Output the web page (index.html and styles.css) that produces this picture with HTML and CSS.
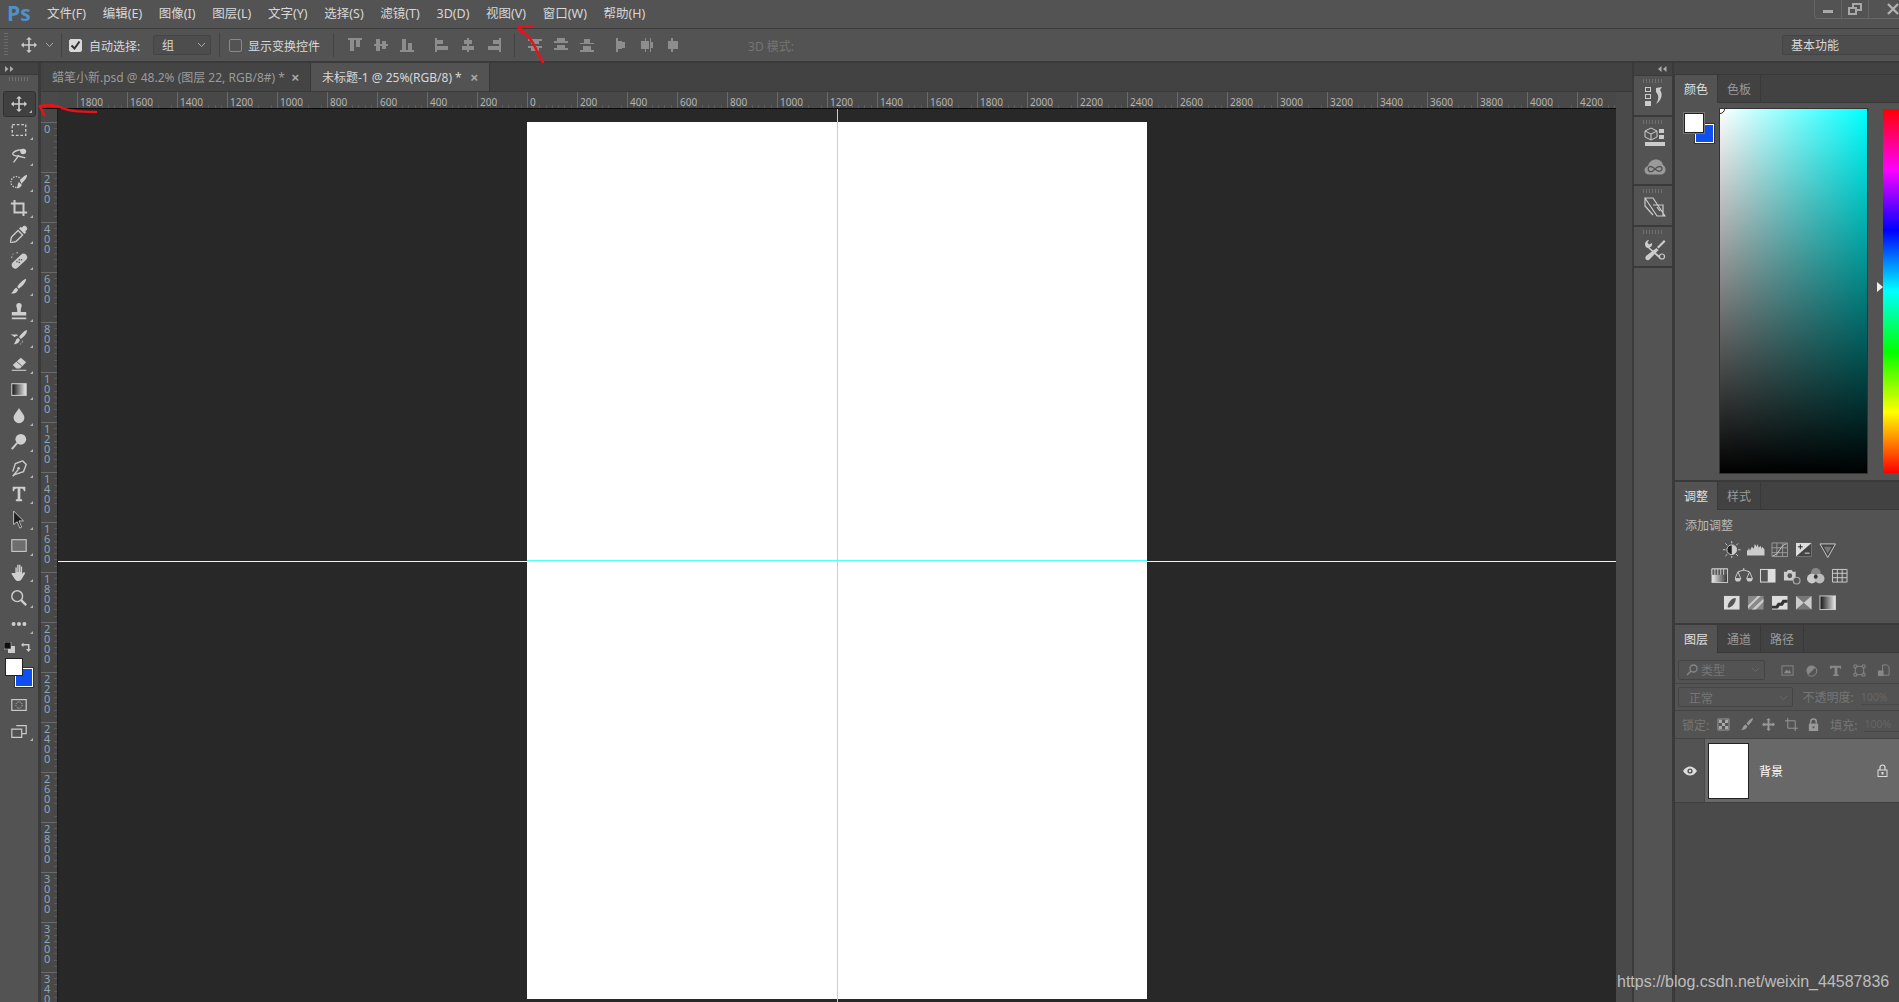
FILE: index.html
```html
<!DOCTYPE html>
<html lang="zh-CN">
  <head>
    <meta charset="utf-8">
    <title>Photoshop</title>
    <link rel="stylesheet" href="styles.css">
  </head>
  <body>
    <div class="app">
      <header class="menubar">
        <span class="logo">Ps</span>
        <nav class="menu">
          <span>文件(F)</span><span>编辑(E)</span><span>图像(I)</span><span>图层(L)</span><span>文字(Y)</span><span>选择(S)</span><span>滤镜(T)</span><span>3D(D)</span><span>视图(V)</span><span>窗口(W)</span><span>帮助(H)</span>
        </nav>
        <div class="winbtns">
          <span class="winbtn"><svg width="12" height="12" viewBox="0 0 12 12"><rect x="1" y="7" width="10" height="3" fill="#a8a8a8"/></svg></span>
          <span class="winbtn"><svg width="14" height="12" viewBox="0 0 14 12" fill="none" stroke="#a8a8a8" stroke-width="2"><rect x="5" y="1" width="8" height="6"/><rect x="1" y="5" width="7" height="6" fill="#535353"/></svg></span>
          <span class="winbtn close"><svg width="12" height="12" viewBox="0 0 12 12" stroke="#b0b0b0" stroke-width="2.400"><path d="M1 1l10 10M11 1L1 11"/></svg></span>
        </div>
      </header>

      <div class="optbar">
        <span class="grip-v"></span>
        <svg class="opt-move" width="16" height="16" viewBox="0 0 20 20" fill="#ccc"><path d="M10 0l3.500 3.500h-2.500v5.500h5.500v-2.500l3.500 3.500-3.500 3.500v-2.500h-5.500v5.500h2.500l-3.500 3.500-3.500-3.500h2.500v-5.500h-5.500v2.500l-3.500-3.500 3.500-3.500v2.500h5.500v-5.500h-2.500z"/></svg>
        <svg class="chev opt-chev" width="9" height="6" viewBox="0 0 9 6"><path d="M1 1l3.500 3.500L8 1" fill="none" stroke="#aaa"/></svg>
        <span class="opt-sep sep-a"></span>
        <span class="check on"><svg width="13" height="13" viewBox="0 0 13 13"><path d="M2.500 6.500l3 3 5-7" fill="none" stroke="#333" stroke-width="2"/></svg></span>
        <span class="opt-label auto-label">自动选择:</span>
        <span class="select group-select">组<svg class="chev" width="9" height="6" viewBox="0 0 9 6"><path d="M1 1l3.500 3.500L8 1" fill="none" stroke="#aaa"/></svg></span>
        <span class="opt-sep sep-b"></span>
        <span class="check"></span>
        <span class="opt-label show-label">显示变换控件</span>
        <span class="opt-sep sep-c"></span>

        <div class="align-group g1">
          <svg viewBox="0 0 16 16"><path d="M1 1h14v2H1zM3 3h4v11H3zM9 3h4v7H9z"/></svg>
          <svg viewBox="0 0 16 16"><path d="M1 7h14v2H1zM3 2h4v12H3zM9 4h4v8H9z"/></svg>
          <svg viewBox="0 0 16 16"><path d="M1 13h14v2H1zM3 2h4v11H3zM9 6h4v7H9z"/></svg>
        </div>
        <div class="align-group g2">
          <svg viewBox="0 0 16 16"><path d="M1 1h2v14H1zM3 3h6v4H3zM3 9h11v4H3z"/></svg>
          <svg viewBox="0 0 16 16"><path d="M7 1h2v14H7zM4 3h8v4H4zM2 9h12v4H2z"/></svg>
          <svg viewBox="0 0 16 16"><path d="M13 1h2v14h-2zM7 3h6v4H7zM2 9h11v4H2z"/></svg>
        </div>
        <span class="opt-sep sep-d"></span>
        <div class="align-group g3">
          <svg viewBox="0 0 16 16"><path d="M1 2h14v2H1zM4 4h8v3H4zM1 9h14v2H1zM4 11h8v3H4z"/></svg>
          <svg viewBox="0 0 16 16"><path d="M1 4h14v2H1zM4 1h8v3H4zM1 11h14v2H1zM4 8h8v3H4z"/></svg>
          <svg viewBox="0 0 16 16"><path d="M1 13h14v2H1zM4 9h8v4H4zM1 6h14v1H1zM5 2h6v4H5z"/></svg>
        </div>
        <div class="align-group g4">
          <svg viewBox="0 0 16 16"><path d="M3 1h2v14H3zM5 4h4v8H5zM9 5h3v6H9z"/></svg>
          <svg viewBox="0 0 16 16"><path d="M6 1h1v14H6zM2 4h4v8H2zM7 4h3v8H7zM11 1h1v14h-1zM12 5h2v6h-2z"/></svg>
          <svg viewBox="0 0 16 16"><path d="M6 1h2v14H6zM3 4h3v8H3zM8 4h5v8H8z"/></svg>
        </div>
        <span class="opt-label dim mode-label">3D 模式:</span>
        <span class="select workspace-select">基本功能</span>
      </div>

      <div class="workspace">
        <aside class="toolbar">
          <div class="collapse-strip"><svg width="9" height="6" viewBox="0 0 9 6" fill="#aaa"><path d="M0 0l3.500 3L0 6zM5 0l3.500 3L5 6z"/></svg></div>
          <div class="grip-h"></div>
          <div class="tools">
            <span class="tool active more"><svg viewBox="0 0 20 20"><path d="M10 0l3.500 3.500h-2.500v5.500h5.500v-2.500l3.500 3.500-3.500 3.500v-2.500h-5.500v5.500h2.500l-3.500 3.500-3.500-3.500h2.500v-5.500h-5.500v2.500l-3.500-3.500 3.500-3.500v2.500h5.500v-5.500h-2.500z"/></svg></span>
            <span class="tool more"><svg viewBox="0 0 20 20"><rect x="2.500" y="4" width="15" height="12" fill="none" stroke="#ccc" stroke-width="1.500" stroke-dasharray="3 2"/></svg></span>
            <span class="tool more"><svg viewBox="0 0 20 20"><path d="M3 7c2-3 9-5 12-3M3 7c0 2 3 3 6 3M9 10l8 2M4 17l6-8" fill="none" stroke="#ccc" stroke-width="1.500"/><path d="M11 4c2-3 7-3 7 1 0 3-4 4-6 2z"/></svg></span>
            <span class="tool more"><svg viewBox="0 0 20 20"><circle cx="7" cy="10" r="6" fill="none" stroke="#ccc" stroke-width="1.500" stroke-dasharray="1.500 1.500"/><path d="M19 2c0 4-4 8-6 9l-2-2c1-2 4-6 8-7zM10 10l3 3c-1 3-3 4-6 4 2-1 1-5 3-7z"/></svg></span>
            <span class="tool more"><svg viewBox="0 0 20 20"><path d="M5 1v14h14M1 5h14v14" fill="none" stroke="#ccc" stroke-width="2.200"/></svg></span>
            <span class="tool more"><svg viewBox="0 0 20 20"><path d="M15 1c2-1 5 2 4 4l-2 2 1 1-2 2-6-6 2-2 1 1z"/><path d="M9 6l5 5-7 7c-1 1-3 1-4 1l-2 1-1-1 1-2c0-1 0-3 1-4z" fill="none" stroke="#ccc" stroke-width="1.500"/></svg></span>
            <span class="tool more"><svg viewBox="0 0 20 20"><path d="M6 15.500L15 7" fill="none" stroke="#ccc" stroke-width="8" stroke-linecap="round"/><path d="M9 2H7M4 3L3 4M2 6v2" stroke="#ccc" fill="none"/><g fill="#535353"><rect x="9.500" y="9" width="1.500" height="1.500"/><rect x="12" y="9" width="1.500" height="1.500"/><rect x="9.500" y="12" width="1.500" height="1.500"/><rect x="7" y="11" width="1.500" height="1.500"/></g></svg></span>
            <span class="tool more"><svg viewBox="0 0 20 20"><path d="M18 2c0 4-5 9-8 11l-2-2c2-3 6-8 10-9zM7 12l2 2c-1 4-4 5-8 4 3-1 3-5 6-6z"/></svg></span>
            <span class="tool more"><svg viewBox="0 0 20 20"><path d="M7 3a3 3 0 1 1 6 0c0 2-1 2-1 5v2h6v4H2v-4h6V8c0-3-1-3-1-5zM2 16h16v2H2z"/></svg></span>
            <span class="tool more"><svg viewBox="0 0 20 20"><path d="M19 1c0 4-4 8-7 10l-2-2c2-3 5-7 9-8zM9 10l2 2c-1 4-4 5-7 5 2-1 2-6 5-7zM1 6h7l1 1-4 2z"/><path d="M14 13c0 2-1 3-3 4" stroke="#ccc" fill="none" stroke-dasharray="1 1"/></svg></span>
            <span class="tool more"><svg viewBox="0 0 20 20"><path d="M12 3l6 5-7 7H7l-4-4z"/><path d="M7 7l6 5" stroke="#535353" fill="none"/><path d="M2 17h16" stroke="#ccc" stroke-width="1.200"/></svg></span>
            <span class="tool more"><svg viewBox="0 0 20 20"><defs><linearGradient id="grad-tool"><stop offset="0" stop-color="#111"/><stop offset="1" stop-color="#eee"/></linearGradient></defs><rect x="2" y="3" width="16" height="13" fill="url(#grad-tool)" stroke="#ccc" stroke-width="1.200"/></svg></span>
            <span class="tool more"><svg viewBox="0 0 20 20"><path d="M10 1c2 4 6 7 6 11a6 6 0 0 1-12 0c0-4 4-7 6-11z"/></svg></span>
            <span class="tool more"><svg viewBox="0 0 20 20"><circle cx="12" cy="7" r="6"/><path d="M8 11l-6 7" stroke="#ccc" stroke-width="2.200"/></svg></span>
            <span class="tool more"><svg viewBox="0 0 20 20"><path d="M14 2l4 4-3 8-9 3-3 2 6-7M14 2L6 5l-3 9" fill="none" stroke="#ccc" stroke-width="1.500"/><circle cx="9.500" cy="10.500" r="1.500"/></svg></span>
            <span class="tool more"><svg viewBox="0 0 20 20"><path d="M3 2h14v5h-1.500c-.5-2-1-3-3-3H11.500v11.500l2 .5v2h-7v-2l2-.5V4H7.500c-2 0-2.500 1-3 3H3z"/></svg></span>
            <span class="tool more"><svg viewBox="0 0 20 20"><path d="M4 0l11 11h-5l3 7-2 1-3-7-4 3z" fill="#1f1f1f" stroke="#ccc"/></svg></span>
            <span class="tool more"><svg viewBox="0 0 20 20"><rect x="2" y="3" width="16" height="13" fill="#6e6e6e" stroke="#ccc" stroke-width="1.200"/></svg></span>
            <span class="tool more"><svg viewBox="0 0 20 20"><path d="M6 11V5h1.500v5H8V2h1.500v8h.5V2h1.500v8h.5V4h1.500v8l2-2 1.500 1-3.500 6c-1 2-2 3-4 3s-3-.5-4-2l-4-6 1-1z"/></svg></span>
            <span class="tool more"><svg viewBox="0 0 20 20"><circle cx="8" cy="8" r="6" fill="none" stroke="#ccc" stroke-width="1.600"/><path d="M12 12l6 6" stroke="#ccc" stroke-width="2.600"/></svg></span>
            <span class="tool more"><svg viewBox="0 0 20 20"><circle cx="4" cy="10" r="2.200"/><circle cx="10" cy="10" r="2.200"/><circle cx="16" cy="10" r="2.200"/></svg></span>
          </div>
          <div class="colors">
            <div class="colors-icons">
              <svg width="11" height="11" viewBox="0 0 11 11"><rect x="4" y="4" width="7" height="7" fill="#ccc"/><rect x="0" y="0" width="7" height="7" fill="#111" stroke="#ccc" stroke-width=".6"/></svg>
              <svg width="11" height="11" viewBox="0 0 11 11"><path d="M1 3l2.500-2.500v1.500h6v5h1.500L8.500 10 6 7h2V3.500H3.500V5z" fill="#ccc"/></svg>
            </div>
            <div class="swatch-pair tool-pair"><span class="swatch bg"></span><span class="swatch fg"></span></div>
          </div>
          <span class="tool"><svg viewBox="0 0 20 20"><rect x="2" y="4" width="16" height="12" fill="none" stroke="#ccc" stroke-width="1.300"/><circle cx="10" cy="10" r="3.500" fill="none" stroke="#ccc" stroke-dasharray="1.200 1.200"/></svg></span>
          <span class="tool more"><svg viewBox="0 0 20 20"><path d="M7 4h11v9h-5M2 8h11v9H2z" fill="none" stroke="#ccc" stroke-width="1.300"/></svg></span>
        </aside>

        <main class="docs">
          <div class="tabs">
            <span class="tab">蜡笔小新.psd @ 48.2% (图层 22, RGB/8#) *<b class="tab-x">×</b></span>
            <span class="tab current">未标题-1 @ 25%(RGB/8) *<b class="tab-x">×</b></span>
          </div>
          <div class="hruler-row">
            <div class="hruler">
              <span class="corner"></span>
              <span class="h-first"></span>
              <span class="mark">1800</span><span class="mark">1600</span><span class="mark">1400</span><span class="mark">1200</span><span class="mark">1000</span><span class="mark">800</span><span class="mark">600</span><span class="mark">400</span><span class="mark">200</span><span class="mark">0</span><span class="mark">200</span><span class="mark">400</span><span class="mark">600</span><span class="mark">800</span><span class="mark">1000</span><span class="mark">1200</span><span class="mark">1400</span><span class="mark">1600</span><span class="mark">1800</span><span class="mark">2000</span><span class="mark">2200</span><span class="mark">2400</span><span class="mark">2600</span><span class="mark">2800</span><span class="mark">3000</span><span class="mark">3200</span><span class="mark">3400</span><span class="mark">3600</span><span class="mark">3800</span><span class="mark">4000</span><span class="mark">4200</span>
            </div>
            <div class="scroll-top"></div>
          </div>
          <div class="doc-body">
            <div class="vruler">
              <span class="vmark">0</span><span class="vmark">200</span><span class="vmark">400</span><span class="vmark">600</span><span class="vmark">800</span><span class="vmark">1000</span><span class="vmark">1200</span><span class="vmark">1400</span><span class="vmark">1600</span><span class="vmark">1800</span><span class="vmark">2000</span><span class="vmark">2200</span><span class="vmark">2400</span><span class="vmark">2600</span><span class="vmark">2800</span><span class="vmark">3000</span><span class="vmark">3200</span><span class="vmark">340</span>
            </div>
            <div class="canvas">
              <div class="page"></div>
              <span class="guide-h"></span>
              <span class="guide-h-page"></span>
              <span class="guide-v"></span>
            </div>
            <div class="scrollbar"></div>
          </div>
        </main>

        <aside class="dock">
          <div class="dock-top"></div>
          <div class="dock-group">
            <span class="grip-h"></span>
            <svg width="22" height="22" viewBox="0 0 22 22"><path d="M1 1h6v5H1zM2 2v3h4V2zM1 8h6v5H1zM2 9v3h4V9zM1 15h6v5H1z" fill="#ccc" fill-rule="evenodd"/><path d="M12 2l6-1-2 3c3 4 2 10-4 14 3-5 3-9 0-12z" fill="#ccc"/></svg>
          </div>
          <div class="dock-group tall">
            <span class="grip-h"></span>
            <svg width="22" height="20" viewBox="0 0 22 20"><path d="M7 1l6 3v6l-6 3-6-3V4z" fill="none" stroke="#ccc"/><path d="M1 4l6 3 6-3M7 7v6" stroke="#ccc" fill="none"/><path d="M15 2h5v4h-5zM15 8h5v4h-5zM1 15h20v4H1z" fill="#ccc"/></svg>
            <svg class="cc-icon" width="22" height="16" viewBox="0 0 22 16"><path d="M5 15.500c-3 0-4.500-2-4.500-4.500 0-2 1.500-3.500 3.500-4C5 3 8 .5 12 .5c4 0 6.500 2.500 7 5.500 1.500.7 2.500 2.500 2.500 4.500 0 3-2 5-5 5z" fill="#9a9a9a"/><path d="M5 8c2-1.500 4 0 6 2s4 3 6 1.500 1-4-1.500-4S12 9 10 11s-4 2-5 1-1-3 0-4z" fill="none" stroke="#535353" stroke-width="1.400"/></svg>
          </div>
          <div class="dock-group">
            <span class="grip-h"></span>
            <svg width="22" height="22" viewBox="0 0 22 22" fill="none" stroke="#ccc" stroke-width="1.200"><path d="M1 2h8l12 18h-8zM1 2v8l8 9M9 9h10v11h-6"/><path d="M13 11l3 4" /></svg>
          </div>
          <div class="dock-group tools-group">
            <span class="grip-h"></span>
            <svg width="22" height="22" viewBox="0 0 22 22"><path d="M1 5c0-2 2-4 4-4L3.500 3.500 5 5.500 8 4c.5 2-.5 4-2.500 4.500l12 10-1.500 1.500-12-11C2.500 9 1 7.500 1 5z" fill="#ccc"/><path d="M20 1l1.500 1.500-7 7L13 8zM12.500 9l2 2L6 20c-1.500 1.500-3 1.500-4 .5s-1-2.500.5-4z" fill="#ccc"/><circle cx="18" cy="17.500" r="2.500" fill="#535353" stroke="#ccc" stroke-width="1.200"/></svg>
          </div>
          <div class="dock-rest"></div>
        </aside>

        <section class="panels">
          <div class="panels-top"><svg width="9" height="6" viewBox="0 0 9 6" fill="#aaa"><path d="M3.500 0L0 3l3.500 3zM8.500 0L5 3l3.500 3z"/></svg></div>
          <div class="panel color-panel">
            <div class="panel-tabs"><span class="ptab current">颜色</span><span class="ptab">色板</span></div>
            <div class="color-body">
              <div class="swatch-pair panel-pair"><span class="swatch bg"></span><span class="swatch fg"></span></div>
              <div class="field"><span class="field-dot"></span></div>
              <span class="hue-arrow"></span>
              <div class="hue"></div>
            </div>
          </div>
          <div class="panel adjust-panel">
            <div class="panel-tabs"><span class="ptab current">调整</span><span class="ptab">样式</span></div>
            <div class="adjust-title">添加调整</div>
            <div class="adj-row r1">
              <svg viewBox="0 0 18 18"><circle cx="9" cy="9" r="5" fill="#222" stroke="#ccc"/><path d="M9 4a5 5 0 0 1 0 10z" fill="#ccc"/><path d="M9 0v2.500M9 15.500V18M0 9h2.500M15.500 9H18M2.500 2.500l2 2M13.500 13.500l2 2M2.500 15.500l2-2M13.500 4.500l2-2" stroke="#ccc"/></svg>
              <svg viewBox="0 0 18 18"><path d="M0 15V9l1 1 1-3 1 3 2-4 2 2 1-5 2 3 1-3 1 4 2-2 1 3 1-2 2 3v6z" fill="#ccc"/></svg>
              <svg viewBox="0 0 18 18" fill="none" stroke="#999"><path d="M1 2h16v14H1zM6 2v14M12 2v14M1 7h16M1 12h16"/><path d="M2 15c6 0 8-12 14-12" stroke="#ccc"/></svg>
              <svg viewBox="0 0 18 18"><path d="M1 2h16v14H1z" fill="#ddd"/><path d="M17 2v14H1z" fill="#444"/><path d="M3 6h5M5.500 3.500v5" stroke="#222"/><path d="M10 12.500h5" stroke="#ddd"/></svg>
              <svg viewBox="0 0 18 18"><path d="M1 3h16L9 17z" fill="#444" stroke="#ccc"/><path d="M5 6h8l-4 7z" fill="#777"/></svg>
            </div>
            <div class="adj-row r2">
              <svg viewBox="0 0 18 18"><defs><linearGradient id="grad-hsl"><stop offset="0" stop-color="#eee"/><stop offset="1" stop-color="#333"/></linearGradient></defs><rect x="1" y="2" width="16" height="14" fill="url(#grad-hsl)" stroke="#ccc"/><path d="M1 8V2h16v6M4 2v6M7 2v6M10 2v6M13 2v6" stroke="#ccc" fill="#555"/></svg>
              <svg viewBox="0 0 18 18"><path d="M9 1v3M3 5l6-2 6 2" stroke="#ccc" fill="none"/><path d="M0 12l3-7 3 7zM12 12l3-7 3 7z" fill="none" stroke="#ccc"/><path d="M0 12h6a3 3 0 0 1-6 0zM12 12h6a3 3 0 0 1-6 0z" fill="#ccc"/></svg>
              <svg viewBox="0 0 18 18"><rect x="1" y="2" width="16" height="14" fill="#ddd"/><rect x="2" y="3" width="7" height="12" fill="#555"/></svg>
              <svg viewBox="0 0 18 18"><path d="M1 5h3l1-2h4l1 2h3v9H1z" fill="#ccc"/><circle cx="7" cy="9" r="2.500" fill="#555"/><circle cx="14" cy="14" r="3.500" fill="#555" stroke="#aaa" stroke-width="1.200"/></svg>
              <svg viewBox="0 0 18 18"><circle cx="9" cy="6" r="5" fill="#888"/><circle cx="5" cy="12" r="5" fill="#ccc"/><circle cx="13" cy="12" r="5" fill="#bbb"/><circle cx="9" cy="10" r="2" fill="#333"/></svg>
              <svg viewBox="0 0 18 18" fill="none" stroke="#ccc"><path d="M1.500 2.500h15v13h-15zM6.500 2.500v13M11.500 2.500v13M1.500 6.500h15M1.500 11h15"/></svg>
            </div>
            <div class="adj-row r3">
              <svg viewBox="0 0 18 18"><rect x="1" y="2" width="16" height="14" fill="#ddd"/><path d="M13 4c1 3-3 10-8 10-1-3 3-10 8-10z" fill="#555"/></svg>
              <svg viewBox="0 0 18 18"><rect x="1" y="2" width="16" height="14" fill="#888"/><path d="M1 12L11 2h3L1 15zM5 16L17 5v3L9 16z" fill="#ccc"/></svg>
              <svg viewBox="0 0 18 18"><rect x="1" y="2" width="16" height="14" fill="#ddd"/><path d="M1 12h4l2-3h3l2-3h5v3h-3l-2 3H9l-2 3H1z" fill="#333"/></svg>
              <svg viewBox="0 0 18 18"><rect x="1" y="2" width="16" height="14" fill="#777"/><path d="M1 2l8 7-8 7zM17 2L9 9l8 7z" fill="#ccc"/></svg>
              <svg viewBox="0 0 18 18"><rect x="1" y="2" width="16" height="14" fill="url(#grad-tool)" stroke="#ccc"/></svg>
            </div>
          </div>
          <div class="panel layers-panel">
            <div class="panel-tabs"><span class="ptab current">图层</span><span class="ptab">通道</span><span class="ptab">路径</span></div>
            <div class="layer-line filter-line">
              <span class="select filter-select"><svg width="12" height="12" viewBox="0 0 12 12" fill="none" stroke="#888" stroke-width="1.300"><circle cx="7.500" cy="4.500" r="3.500"/><path d="M5 7l-4 4"/></svg><span>类型</span><svg class="chev" width="9" height="6" viewBox="0 0 9 6"><path d="M1 1l3.500 3.500L8 1" fill="none" stroke="#666"/></svg></span>
              <div class="filter-icons">
                <svg viewBox="0 0 14 14"><rect x="1" y="2" width="12" height="10" fill="none" stroke="#888"/><path d="M3 10l3-4 2 2 1-2 2 4z" fill="#888"/></svg>
                <svg viewBox="0 0 14 14"><circle cx="7" cy="7" r="5.500" fill="#888"/><path d="M11 3.500a5.500 5.500 0 0 1-8 8z" fill="#555" stroke="#888"/></svg>
                <svg viewBox="0 0 14 14"><path d="M1 2h12v3h-1c0-1-1-1-3-1v7l1.500.5V13h-6v-1.500L6 11V4c-2 0-3 0-3 1H1z" fill="#888"/></svg>
                <svg viewBox="0 0 14 14" fill="none" stroke="#888"><path d="M2.500 2.500h9v9h-9z"/><path d="M1 1h3v3H1zM10 1h3v3h-3zM1 10h3v3H1zM10 10h3v3h-3z" fill="#555"/></svg>
                <svg viewBox="0 0 14 14"><path d="M6 1h5l2 2v9H6z" fill="none" stroke="#888"/><rect x="1" y="7" width="6" height="6" fill="#888"/></svg>
              </div>
            </div>
            <div class="layer-line blend-line">
              <span class="select blend-select"><span>正常</span><svg class="chev" width="9" height="6" viewBox="0 0 9 6"><path d="M1 1l3.500 3.500L8 1" fill="none" stroke="#666"/></svg></span>
              <span class="dim-label">不透明度:</span>
              <span class="pct">100%</span>
            </div>
            <div class="layer-line lock-line">
              <span class="dim-label lock-label">锁定:</span>
              <div class="lock-icons">
                <svg viewBox="0 0 14 14"><path d="M1 1h12v12H1z" fill="#555" stroke="#999"/><path d="M2 2h3.300v3.300H2zM8.700 2H12v3.300H8.700zM5.300 5.300h3.400v3.400H5.300zM2 8.700h3.300V12H2zM8.700 8.700H12V12H8.700z" fill="#aaa"/></svg>
                <svg viewBox="0 0 14 14"><path d="M14 0c0 3-3 6-5 8L7 6c2-3 4-5 7-6zM6 7l2 2c-1 3-3 4-7 4 2-1 2-5 5-6z" fill="#999"/></svg>
                <svg viewBox="0 0 14 14"><path d="M7 0l2.500 2.500H8V6h3.500V4.500L14 7l-2.500 2.500V8H8v3.500h1.500L7 14l-2.500-2.500H6V8H2.500v1.500L0 7l2.500-2.500V6H6V2.500H4.500z" fill="#999"/></svg>
                <svg viewBox="0 0 14 14" fill="none" stroke="#999"><path d="M3 0v11h11M0 3h11v11"/></svg>
                <svg viewBox="0 0 14 14"><path d="M4 6V4a3 3 0 0 1 6 0v2" fill="none" stroke="#999" stroke-width="1.500"/><rect x="2" y="6" width="10" height="8" fill="#999"/><rect x="6" y="9" width="2" height="2" fill="#555"/></svg>
              </div>
              <span class="dim-label fill-label">填充:</span>
              <span class="pct">100%</span>
            </div>
            <div class="layer-row">
              <span class="eye-col"><svg width="14" height="10" viewBox="0 0 14 10"><path d="M0 5c2-3 4.500-4.500 7-4.500S12 2 14 5c-2 3-4.500 4.500-7 4.500S2 8 0 5z" fill="#ddd"/><circle cx="7" cy="5" r="2.600" fill="#535353"/><circle cx="7" cy="5" r="1.200" fill="#ddd"/></svg></span>
              <div class="layer-main">
                <span class="thumb"></span>
                <span class="layer-name">背景</span>
                <svg class="layer-lock" width="11" height="13" viewBox="0 0 11 13"><path d="M3 6V3.500a2.500 2.500 0 0 1 5 0V6" fill="none" stroke="#ddd" stroke-width="1.200"/><rect x="1" y="6" width="9" height="6.500" fill="none" stroke="#ddd"/><rect x="4.500" y="8" width="2" height="2.500" fill="#ddd"/></svg>
              </div>
            </div>
          </div>
        </section>
      </div>

      <svg class="arrows" width="120" height="120" viewBox="0 0 120 120" fill="none" stroke="#e8121a" stroke-width="2.600" stroke-linecap="round" stroke-linejoin="round">
        <path d="M40 106c8-1 14-1 20 1 5 3 14 5 36 5M40 106l13-1M40 106l4 9"/>
      </svg>
      <svg class="arrows view-arrow" width="40" height="40" viewBox="0 0 40 40" fill="none" stroke="#e8121a" stroke-width="2.600" stroke-linecap="round" stroke-linejoin="round">
        <path d="M3 2c8 6 14 12 18 22 2 4 4 9 7 13M3 2l15-1M3 2l4 6"/>
      </svg>
      <span class="watermark">https://blog.csdn.net/weixin_44587836</span>
    </div>
  </body>
</html>
```

FILE: styles.css
```css
* {
  box-sizing: border-box;
}

html, body {
  margin: 0;
  height: 100%;
  overflow: hidden;
}

body {
  font-family: "Noto Sans", "Noto Sans CJK SC", sans-serif;
  font-size: 12px;
  color: #d8d8d8;
  background: #535353;
}

.app {
  position: relative;
  height: 1002px;
  display: flex;
  flex-direction: column;
  overflow: hidden;
}

/* menu bar */
.menubar {
  height: 29px;
  flex: none;
  display: flex;
  align-items: flex-start;
  background: #535353;
  border-bottom: 1px solid #3a3a3a;
}

.logo {
  width: 47px;
  padding-left: 7px;
  font: bold 21px/26px "Open Sans", sans-serif;
  color: #4f91c9;
}

.menu {
  display: flex;
  gap: 16.700px;
  line-height: 27px;
  font-size: 12.500px;
}

.winbtns {
  margin-left: auto;
  height: 19px;
  width: 85px;
  display: flex;
  border: 1px solid #666;
  border-top: 0;
  border-right: 0;
  border-radius: 0 0 0 4px;
}

.winbtn {
  width: 27px;
  display: flex;
  align-items: center;
  justify-content: center;
  border-right: 1px solid #666;
}

.winbtn.close {
  border-right: 0;
  width: 30px;
  padding-left: 18px;
}

/* options bar */
.optbar {
  position: relative;
  height: 34px;
  flex: none;
  display: flex;
  align-items: center;
  background: #535353;
  border-bottom: 2px solid #3a3a3a;
}

.grip-v {
  width: 4px;
  height: 24px;
  margin-left: 4px;
  background: repeating-linear-gradient(#6a6a6a 0 1px, transparent 1px 3px);
}

.opt-move {
  margin-left: 13px;
  margin-right: 1px;
}

.chev {
  flex: none;
}

.opt-chev {
  margin-left: 7px;
}

.opt-sep {
  width: 1px;
  height: 24px;
  background: #424242;
}

.sep-a { margin-left: 7px; }
.sep-b { margin-left: 8px; }
.sep-c { margin-left: 13px; }
.sep-d { margin-left: 2px; }

.check {
  width: 13px;
  height: 13px;
  margin-left: 7px;
  border: 1px solid #8a8a8a;
  border-radius: 2px;
  display: flex;
}

.check.on {
  background: #d8d8d8;
  border-color: #d8d8d8;
  align-items: center;
  justify-content: center;
}

.check.on svg {
  flex: none;
}

.check:not(.on) {
  margin-left: 9px;
}

.opt-label {
  padding-top: 2px;
  white-space: nowrap;
}

.auto-label {
  margin-left: 7px;
  width: 64px;
}

.show-label {
  margin-left: 6px;
}

.dim {
  color: #747474;
}

.select {
  height: 20px;
  display: flex;
  align-items: center;
  justify-content: space-between;
  border: 1px solid #444;
  border-radius: 2px;
  background: #4d4d4d;
}

.group-select {
  width: 58px;
  padding: 0 4px 0 8px;
}

.align-group {
  display: flex;
}

.align-group svg {
  width: 16px;
  height: 16px;
  margin-right: 10px;
  fill: #8d8d8d;
}

.align-group.g1 { margin-left: 13px; }
.align-group.g2 { margin-left: 9px; }
.align-group.g3 { margin-left: 12px; }
.align-group.g4 { margin-left: 8px; }

.mode-label {
  margin-left: 57px;
}

.workspace-select {
  position: absolute;
  left: 1782px;
  top: 6px;
  width: 130px;
  padding-left: 8px;
  justify-content: flex-start;
}

/* main row */
.workspace {
  flex: 1;
  min-height: 0;
  display: flex;
  background: #3a3a3a;
}

.toolbar {
  width: 38px;
  flex: none;
  display: flex;
  flex-direction: column;
  align-items: center;
  background: #535353;
}

.collapse-strip {
  align-self: stretch;
  height: 12px;
  padding-left: 5px;
  display: flex;
  align-items: center;
  background: #424242;
  border-bottom: 1px solid #3a3a3a;
}

.grip-h {
  display: block;
  width: 20px;
  height: 4px;
  flex: none;
  background: repeating-linear-gradient(90deg, #707070 0 1px, transparent 1px 3px);
}

.toolbar > .grip-h {
  margin: 2px 0 0;
}

.tools {
  margin-top: 10px;
  display: flex;
  flex-direction: column;
}

.tool {
  position: relative;
  width: 33px;
  height: 26px;
  flex: none;
  display: flex;
  align-items: center;
  justify-content: center;
  border-radius: 3px;
}

.tool svg {
  width: 18px;
  height: 18px;
  fill: #cfcfcf;
}

.tool.active {
  background: #404040;
  border: 1px solid #303030;
}

.tool.active svg {
  width: 16px;
  height: 16px;
}

.more::after {
  content: "";
  position: absolute;
  right: 3px;
  bottom: 3px;
  border-left: 3px solid transparent;
  border-bottom: 3px solid #b5b5b5;
}

.colors {
  align-self: stretch;
  height: 55px;
  flex: none;
}

.colors-icons {
  display: flex;
  justify-content: space-between;
  padding: 5px 7px 0 4px;
}

.swatch-pair {
  position: relative;
}

.swatch {
  position: absolute;
  display: block;
}

.swatch.fg {
  background: #fff;
  border: 1px solid #222;
  box-shadow: 0 0 0 1px #777;
}

.swatch.bg {
  background: #0f4ef0;
  border: 1px solid #fff;
  box-shadow: 0 0 0 1px #333;
}

.tool-pair .fg {
  left: 5px;
  top: 5px;
  width: 18px;
  height: 18px;
  box-shadow: none;
}

.tool-pair .bg {
  left: 15px;
  top: 15px;
  width: 18px;
  height: 19px;
}

/* documents */
.docs {
  width: 1591px;
  flex: none;
  margin-left: 3px;
  display: flex;
  flex-direction: column;
  background: #282828;
}

.tabs {
  height: 29px;
  flex: none;
  display: flex;
  background: #424242;
  border-bottom: 1px solid #383838;
}

.tab {
  padding: 0 11px;
  display: flex;
  align-items: center;
  justify-content: space-between;
  width: 270px;
  color: #9a9a9a;
  background: #444;
  border-right: 1px solid #383838;
  white-space: nowrap;
}

.tab.current {
  width: 179px;
  color: #d8d8d8;
  background: #535353;
}

.tab-x {
  font: bold 13px/1 "Liberation Sans", sans-serif;
  color: #aaa;
}

.hruler-row {
  height: 17px;
  flex: none;
  display: flex;
}

.hruler {
  width: 1575px;
  display: flex;
  overflow: hidden;
  background: #484848;
  border-bottom: 1px solid #0c0c0c;
}

.corner {
  width: 17px;
  flex: none;
  background: #4a4a4a;
}

.h-first {
  width: 19px;
  flex: none;
}

.mark {
  width: 50px;
  flex: none;
  padding-left: 2px;
  font-size: 10px;
  line-height: 21px;
  color: #b3b3b3;
  border-left: 1px solid #6a6a6a;
  background: repeating-linear-gradient(90deg, transparent 0 5.250px, #5c5c5c 5.250px 6.250px) 0 13px / 100% 3px no-repeat;
}

.scroll-top {
  flex: 1;
  background: #4a4a4a;
}

.doc-body {
  flex: 1;
  min-height: 0;
  display: flex;
}

.vruler {
  width: 17px;
  flex: none;
  padding-top: 13px;
  overflow: hidden;
  background: #484848;
  border-right: 1px solid #1c1c1c;
}

.vmark {
  display: block;
  height: 50px;
  padding: 1px 5px 0 3px;
  font-size: 11px;
  line-height: 10px;
  width: 100%;
  word-break: break-all;
  color: #8fa5b8;
  border-top: 1px solid #6a6a6a;
  background: repeating-linear-gradient(transparent 0 5.250px, #5c5c5c 5.250px 6.250px) right 0 / 3px 100% no-repeat;
}

.canvas {
  position: relative;
  width: 1558px;
  flex: none;
  padding: 13px 0 0 469px;
  background: #282828;
  overflow: hidden;
}

.page {
  width: 620px;
  height: 877px;
  background: #fff;
}

.guide-h, .guide-h-page, .guide-v {
  position: absolute;
  display: block;
}

.guide-h {
  left: 0;
  right: 0;
  top: 452px;
  height: 1px;
  background: #d4ffff;
}

.guide-h-page {
  left: 469px;
  width: 620px;
  top: 451px;
  height: 1px;
  background: #55ffff;
}

.guide-v {
  left: 779px;
  top: 0;
  bottom: 0;
  width: 1px;
  background: #55ffff;
}

.scrollbar {
  flex: 1;
  background: #4a4a4a;
}

/* icon dock */
.dock {
  width: 38px;
  flex: none;
  margin-left: 2px;
  display: flex;
  flex-direction: column;
  gap: 2px;
}

.dock-top {
  height: 12px;
  flex: none;
  background: #424242;
  margin-bottom: -1px;
}

.dock-group {
  height: 39px;
  flex: none;
  padding-top: 3px;
  display: flex;
  flex-direction: column;
  align-items: center;
  gap: 3px;
  background: #535353;
}

.dock-group svg {
  flex: none;
  margin-left: 3px;
}

.dock-group.tall {
  height: 67px;
}

.cc-icon {
  margin-top: 9px;
}

.tools-group svg {
  margin-top: 2px;
}

.dock-rest {
  flex: 1;
  background: #535353;
}

/* panels */
.panels {
  width: 225px;
  flex: none;
  margin-left: 2px;
  padding-left: 1px;
  display: flex;
  flex-direction: column;
  gap: 2px;
  background: #3a3a3a;
}

.panels-top {
  height: 12px;
  flex: none;
  margin: 0 0 -2px -1px;
  background: #424242;
  border-bottom: 1px solid #383838;
  display: flex;
  align-items: center;
}

.panels-top svg {
  margin-left: -16px;
}

.panel {
  background: #535353;
  flex: none;
}

.panel-tabs {
  height: 28px;
  display: flex;
  background: #424242;
  border-bottom: 1px solid #383838;
}

.ptab {
  width: 43px;
  display: flex;
  align-items: center;
  justify-content: center;
  color: #9a9a9a;
  border-right: 1px solid #383838;
}

.ptab.current {
  color: #e0e0e0;
  background: #535353;
  height: 28px;
}

.color-panel {
  height: 405px;
}

.color-body {
  position: relative;
  padding: 6px 0 0 45px;
  display: flex;
}

.panel-pair {
  position: absolute;
  left: 9px;
  top: 10px;
}

.panel-pair .fg {
  width: 20px;
  height: 20px;
  left: 0;
  top: 0;
}

.panel-pair .bg {
  width: 19px;
  height: 19px;
  left: 11px;
  top: 11px;
}

.field {
  position: relative;
  width: 147px;
  height: 364px;
  overflow: hidden;
  background: linear-gradient(to top, #000, transparent), linear-gradient(to right, #fff, #0ff);
  outline: 1px solid #333;
}

.field-dot {
  position: absolute;
  left: -5px;
  top: -5px;
  width: 10px;
  height: 10px;
  border: 1px solid #222;
  border-radius: 50%;
}

.hue-arrow {
  margin: 173px 0 0 10px;
  width: 0;
  height: 0;
  border-left: 6px solid #f0f0f0;
  border-top: 5px solid transparent;
  border-bottom: 5px solid transparent;
}

.hue {
  margin-left: 0;
  width: 16px;
  height: 364px;
  background: linear-gradient(#f00, #f0f 16.670%, #00f 33.330%, #0ff 50%, #0f0 66.670%, #ff0 83.330%, #f00);
}

.adjust-panel {
  height: 141px;
}

.adjust-title {
  padding: 7px 0 0 10px;
  line-height: 17px;
  color: #b8b8b8;
}

.adj-row {
  display: flex;
  gap: 6.500px;
  height: 26.500px;
  align-items: center;
}

.adj-row svg {
  width: 17.500px;
  height: 17.500px;
  flex: none;
}

.r1, .r3 {
  padding-left: 48px;
}

.r1 {
  margin-top: 2px;
}

.r2 {
  padding-left: 36px;
}

.layers-panel {
  flex: 1;
  background: #4a4a4a;
}

.layer-line {
  display: flex;
  align-items: center;
  background: #535353;
  border-bottom: 1px solid #444;
}

.filter-line {
  height: 31px;
  padding: 4px 0 0 3px;
}

.filter-select {
  width: 87px;
  padding: 0 4px 0 7px;
  justify-content: flex-start;
  color: #767676;
  background: #535353;
}

.filter-select span {
  margin-left: 3px;
}

.filter-select .chev {
  margin-left: auto;
}

.filter-icons {
  display: flex;
  gap: 11px;
  margin-left: 16px;
}

.filter-icons svg, .lock-icons svg {
  width: 13px;
  height: 13px;
  flex: none;
}

.blend-line {
  height: 27px;
  padding-left: 3px;
}

.blend-select {
  width: 119px;
  padding: 1px 4px 0 10px;
  color: #767676;
  background: #535353;
}

.dim-label {
  margin-left: 10px;
  color: #767676;
  white-space: nowrap;
}

.pct {
  margin-left: 7px;
  width: 40px;
  font-size: 10.500px;
  color: #666;
  border-bottom: 1px solid #484848;
}

.lock-line {
  height: 28px;
}

.lock-label {
  margin-left: 7px;
}

.lock-icons {
  display: flex;
  gap: 9.500px;
  margin-left: 8px;
}

.fill-label {
  margin-left: 10px;
}

.layer-row {
  height: 64px;
  display: flex;
  background: #535353;
  border-bottom: 1px solid #3f3f3f;
}

.eye-col {
  width: 30px;
  display: flex;
  align-items: center;
  justify-content: center;
  border-right: 1px solid #484848;
}

.layer-main {
  flex: 1;
  display: flex;
  align-items: center;
  padding-left: 3px;
  background: #686868;
}

.thumb {
  width: 41px;
  height: 56px;
  background: #fff;
  border: 1px solid #222;
}

.layer-name {
  margin-left: 10px;
  color: #fff;
}

.layer-lock {
  margin-left: auto;
  margin-right: 11px;
}

/* annotations on top of the screenshot */
.arrows {
  position: absolute;
  left: 0;
  top: 0;
  overflow: visible;
}

.view-arrow {
  left: 515px;
  top: 25px;
}

.watermark {
  position: absolute;
  left: 1617px;
  top: 972px;
  font: 16px/20px "Liberation Sans", sans-serif;
  color: #bdbdbd;
  white-space: nowrap;
}
```
